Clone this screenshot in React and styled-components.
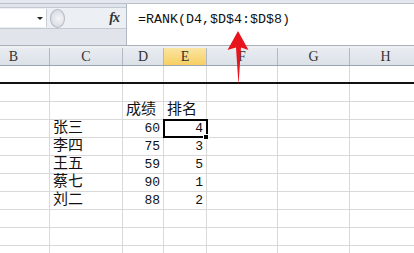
import React from "react";
import styled, { createGlobalStyle } from "styled-components";

const Global = createGlobalStyle`
  html, body { margin: 0; padding: 0; background: #fff; }
`;

const COLS = [72, 73, 41, 43, 71, 72, 72];
const LETTERS = ["B", "C", "D", "E", "F", "G", "H"];
const GRID = COLS.map((w) => `${w}px`).join(" ");

const Root = styled.div`
  position: relative;
  width: 414px;
  height: 253px;
  overflow: hidden;
  background: #fff;
  font-family: "Liberation Mono", "Noto Sans CJK SC", monospace;
`;

const TopStrip = styled.div`
  height: 4px;
  background: #e4e8ee;
  border-bottom: 1px solid #b9c0c9;
  box-sizing: border-box;
`;

const FormulaBar = styled.div`
  display: flex;
  height: 41px;
`;

const NamePanel = styled.div`
  width: 126px;
  background: #e1e5eb;
  display: flex;
  flex-direction: column;
`;

const NameRow = styled.div`
  margin-top: 3px;
  height: 20px;
  display: flex;
  align-items: center;
  border-top: 1px solid #c3c9d1;
  border-bottom: 1px solid #c3c9d1;
  background: #eceff3;
`;

const NameBox = styled.div`
  width: 47px;
  height: 18px;
  background: #fff;
  position: relative;
  border-right: 1px solid #c9ced6;
  box-sizing: border-box;
`;

const DropArrow = styled.span`
  position: absolute;
  left: 37px;
  top: 8px;
  width: 0;
  height: 0;
  border-left: 3px solid transparent;
  border-right: 3px solid transparent;
  border-top: 3px solid #222;
`;

const Knob = styled.div`
  width: 15px;
  height: 19px;
  margin-left: 3px;
  border-radius: 50%;
  border: 1px solid #b3bac4;
  background: radial-gradient(circle at 60% 50%, #f4f5f7 0, #dadee4 70%);
  box-sizing: border-box;
`;

const Fx = styled.span`
  margin-left: auto;
  margin-right: 7px;
  font-family: "Liberation Serif", serif;
  font-style: italic;
  font-weight: bold;
  font-size: 14px;
  color: #333;
  letter-spacing: -1px;
`;

const FormulaInput = styled.div`
  flex: 1;
  background: #fff;
  border-left: 1px solid #b0b8c3;
  padding: 8px 0 0 11px;
  font-family: "Liberation Mono", monospace;
  font-size: 13.33px;
  line-height: 16px;
  color: #111;
  white-space: pre;
`;

const Divider = styled.div`
  height: 3px;
  background: #eef0f3;
  border-top: 1px solid #a9b0ba;
  box-sizing: border-box;
`;

const Sheet = styled.div`
  margin-left: -22px;
`;

const Row = styled.div`
  display: grid;
  grid-template-columns: ${GRID};
  height: 18px;
  box-sizing: border-box;
  border-bottom: ${(p) => (p.$thick ? "2px solid #111" : "1px solid #d9d9d9")};
`;

const HeadRow = styled(Row)`
  border-bottom: 1px solid #9ba5b2;
`;

const Head = styled.div`
  display: flex;
  align-items: center;
  justify-content: center;
  border-right: 1px solid #b2b9c3;
  background: ${(p) =>
    p.$sel
      ? "linear-gradient(#fbe5a2, #f7cf63)"
      : "linear-gradient(#e9edf2, #dce1e8)"};
  font-family: "Liberation Serif", serif;
  font-size: 14px;
  color: #333;
`;

const Cell = styled.div`
  position: relative;
  display: flex;
  align-items: center;
  justify-content: ${(p) => (p.$right ? "flex-end" : "flex-start")};
  padding: 0 3px 0 3px;
  border-right: 1px solid #d9d9d9;
  font-size: ${(p) => (p.$num ? "13px" : "15px")};
  line-height: 17px;
  color: #111;
  white-space: nowrap;
  ${(p) =>
    p.$active &&
    `
    outline: 2px solid #000;
    outline-offset: -1px;
    z-index: 2;
    &::after {
      content: "";
      position: absolute;
      right: -3px;
      bottom: -3px;
      width: 4px;
      height: 4px;
      background: #000;
      border: 1px solid #fff;
    }
  `}
`;

const Arrow = styled.svg`
  position: absolute;
  left: 0;
  top: 0;
  pointer-events: none;
`;

const data = [
  ["张三", "60", "4"],
  ["李四", "75", "3"],
  ["王五", "59", "5"],
  ["蔡七", "90", "1"],
  ["刘二", "88", "2"],
];

const blank = () => COLS.map((_, i) => <Cell key={i} />);

export default function App() {
  return (
    <Root>
      <Global />
      <TopStrip />
      <FormulaBar>
        <NamePanel>
          <NameRow>
            <NameBox>
              <DropArrow />
            </NameBox>
            <Knob />
            <Fx>fx</Fx>
          </NameRow>
        </NamePanel>
        <FormulaInput>=RANK(D4,$D$4:$D$8)</FormulaInput>
      </FormulaBar>
      <Divider />
      <Sheet>
        <HeadRow>
          {LETTERS.map((l) => (
            <Head key={l} $sel={l === "E"}>
              {l}
            </Head>
          ))}
        </HeadRow>
        <Row $thick>{blank()}</Row>
        <Row>{blank()}</Row>
        <Row>
          <Cell />
          <Cell />
          <Cell>成绩</Cell>
          <Cell>排名</Cell>
          <Cell />
          <Cell />
          <Cell />
        </Row>
        {data.map(([name, score, rank], i) => (
          <Row key={name}>
            <Cell />
            <Cell>{name}</Cell>
            <Cell $right $num>
              {score}
            </Cell>
            <Cell $right $num $active={i === 0}>
              {rank}
            </Cell>
            <Cell />
            <Cell />
            <Cell />
          </Row>
        ))}
        <Row>{blank()}</Row>
        <Row>{blank()}</Row>
        <Row>{blank()}</Row>
      </Sheet>
      <Arrow width="414" height="253" viewBox="0 0 414 253">
        <polygon
          points="238,31 248.5,50 241,47.5 238.5,85 236,47.5 227.5,50"
          fill="#e8141b"
        />
      </Arrow>
    </Root>
  );
}
